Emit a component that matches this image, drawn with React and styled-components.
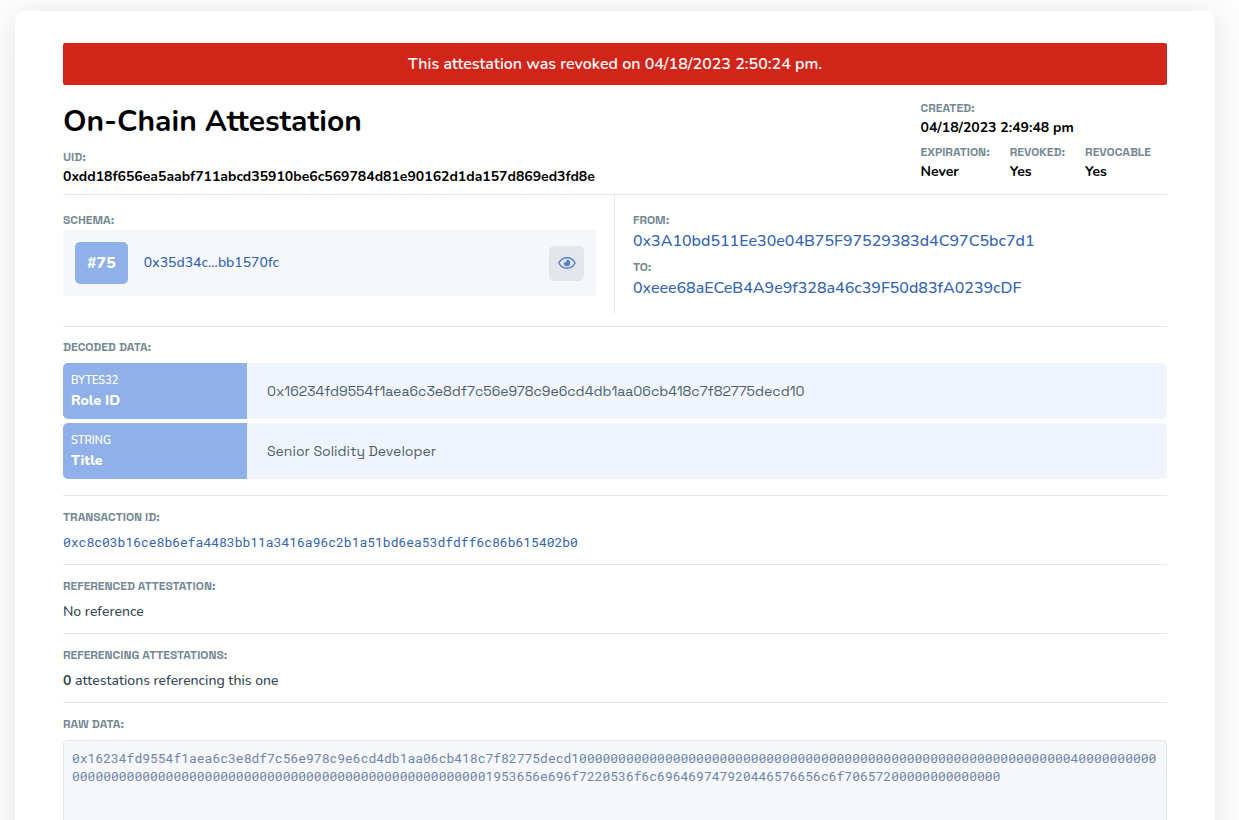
import React from "react";
import styled, { createGlobalStyle } from "styled-components";

const rounded = `"Nunito", "Open Sans", "Noto Sans", sans-serif`;
const grotesk = `"Space Grotesk", Inter, sans-serif`;
const mono = `"Roboto Mono", "Liberation Mono", monospace`;

const GlobalStyle = createGlobalStyle`
  *, *::before, *::after { box-sizing: border-box; }
  body { margin: 0; background: #fdfdfd; color: #000; font-family: ${rounded}; font-size: 14px; }
  h1, p { margin: 0; }
`;

const Page = styled.main`
  padding: 11px 24px 32px 15px;
`;

const Card = styled.article`
  padding: 32px 48px;
  background: #fff;
  border-radius: 10px;
  box-shadow: 0 4px 33px rgba(0, 0, 0, 0.1);
`;

const Banner = styled.div`
  padding: 10px 16px;
  border-radius: 2px;
  background: #d1251a;
  color: #fff;
  font-size: 16px;
  font-weight: 600;
  line-height: 22px;
  text-align: center;
`;

const Header = styled.header`
  display: flex;
  align-items: flex-start;
  justify-content: space-between;
  padding: 14px 16px 7px 0;
`;

const Title = styled.h1`
  margin-bottom: 3px;
  font-size: 30px;
  font-weight: 700;
  line-height: 46px;
`;

const Label = styled.label`
  display: block;
  margin-bottom: ${(p) => p.$gap ?? 1}px;
  color: #748893;
  font-family: ${grotesk};
  font-size: 12px;
  font-weight: 700;
  line-height: 18px;
  text-transform: uppercase;
`;

const Strong = styled.p`
  font-size: 14px;
  font-weight: 700;
  line-height: 20px;
`;

const Meta = styled.div`
  display: grid;
  gap: 5px;
`;

const MetaRow = styled.div`
  display: flex;
  gap: 20px;
`;

const Overview = styled.section`
  display: grid;
  grid-template-columns: 1fr 1fr;
  padding-bottom: 12px;
  border-top: 1px solid #e4e6ed;
`;

const SchemaPane = styled.div`
  padding: 16px 18px 18px 0;
  border-right: 1px solid #e4e6ed;
`;

const PartiesPane = styled.div`
  display: grid;
  align-content: start;
  gap: 6px;
  padding: 16px 0 0 18px;
`;

const SchemaBox = styled.div`
  display: flex;
  align-items: center;
  padding: 12px;
  background: #f5f7fb;
`;

const Badge = styled.span`
  padding: 10px 12px;
  border-radius: 5px;
  background: #8fb0e8;
  color: #fff;
  font-size: 16px;
  font-weight: 800;
  line-height: 22px;
`;

const Link = styled.a`
  display: block;
  color: #3363b3;
  text-decoration: none;
  font-family: ${(p) => (p.$mono ? mono : rounded)};
  font-size: ${(p) => p.$size}px;
  font-weight: ${(p) => (p.$mono ? 400 : 500)};
  line-height: ${(p) => (p.$size > 14 ? 22 : 18)}px;
`;

const SchemaLink = styled(Link)`
  flex: 1;
  margin-left: 16px;
  line-height: 22px;
`;

const EyeButton = styled.button`
  display: grid;
  place-items: center;
  width: 35px;
  height: 35px;
  padding: 0;
  border: 0;
  border-radius: 5px;
  background: #e3e7ec;
  color: #557fcb;
`;

const Section = styled.section`
  padding: 12px 0 11px;
  border-top: 1px solid #e4e6ed;
`;

const DecodedSection = styled(Section)`
  padding: 11px 0 16px;
`;

const DataTable = styled.table`
  display: block;
`;

const DataBody = styled.tbody`
  display: grid;
  gap: 4px;
`;

const DataRow = styled.tr`
  display: flex;
  height: 56px;
  border-radius: 5px;
  overflow: hidden;
`;

const NameCell = styled.th`
  width: 184px;
  padding: 9px 8px 7px;
  background: #8fb0e8;
  color: #fff;
  font-size: 14px;
  font-weight: 800;
  line-height: 22px;
  text-align: left;
`;

const Kind = styled.span`
  display: block;
  font-size: 11px;
  font-weight: 600;
  line-height: 18px;
`;

const ValueCell = styled.td`
  flex: 1;
  padding: 19px 20px;
  background: #f0f5fd;
  color: #4c5f6b;
  font-family: ${grotesk};
  font-size: 14px;
  line-height: 18px;
`;

const Text = styled.p`
  min-height: 20px;
  color: #364955;
  font-size: 14px;
  font-weight: 500;
  line-height: 20px;
`;

const RawData = styled.textarea`
  display: block;
  width: 100%;
  height: 120px;
  padding: 8px;
  border: 1px solid #e2e5e9;
  border-radius: 4px;
  background: #f5f7fb;
  color: #6f85a9;
  font-family: ${mono};
  font-size: 13px;
  line-height: 18px;
  word-break: break-all;
  overflow: hidden;
  resize: none;
`;

const EyeIcon = () => (
  <svg width="18" height="12" viewBox="0 0 18 12" fill="none" aria-hidden="true">
    <path
      d="M.8 6C2.5 2.7 5.5.8 9 .8S15.500 2.700 17.200 6C15.500 9.300 12.500 11.200 9 11.200S2.500 9.300.8 6Z"
      stroke="currentColor"
      strokeWidth="1.400"
      strokeLinejoin="round"
    />
    <path d="M9 2.800A3.200 3.200 0 1 1 5.900 5.200Q7.700 6 8.300 4.800Q8.700 3.800 8.200 2.900Z" fill="currentColor" />
  </svg>
);

const roleId = "16234fd9554f1aea6c3e8df7c56e978c9e6cd4db1aa06cb418c7f82775decd10";
const rawData =
  "0x" +
  roleId +
  "40".padStart(64, "0") +
  "19".padStart(64, "0") +
  "53656e696f7220536f6c696469747920446576656c6f706572".padEnd(64, "0");

const decoded = [
  { kind: "BYTES32", name: "Role ID", value: `0x${roleId}` },
  { kind: "STRING", name: "Title", value: "Senior Solidity Developer" },
];

const Field = ({ label, children }) => (
  <div>
    <Label as="div">{label}</Label>
    {children}
  </div>
);

export default function App() {
  return (
    <>
      <GlobalStyle />
      <Page>
        <Card>
          <Banner role="status">This attestation was revoked on 04/18/2023 2:50:24 pm.</Banner>

          <Header>
            <div>
              <Title>On-Chain Attestation</Title>
              <Field label="UID:">
                <Strong>0xdd18f656ea5aabf711abcd35910be6c569784d81e90162d1da157d869ed3fd8e</Strong>
              </Field>
            </div>
            <Meta>
              <Field label="Created:">
                <Strong>04/18/2023 2:49:48 pm</Strong>
              </Field>
              <MetaRow>
                <Field label="Expiration:"><Strong>Never</Strong></Field>
                <Field label="Revoked:"><Strong>Yes</Strong></Field>
                <Field label="Revocable"><Strong>Yes</Strong></Field>
              </MetaRow>
            </Meta>
          </Header>

          <Overview>
            <SchemaPane>
              <Field label="Schema:">
                <SchemaBox>
                  <Badge>#75</Badge>
                  <SchemaLink href="#schema" $size={14}>0x35d34c...bb1570fc</SchemaLink>
                  <EyeButton type="button" aria-label="View schema">
                    <EyeIcon />
                  </EyeButton>
                </SchemaBox>
              </Field>
            </SchemaPane>
            <PartiesPane>
              <Field label="From:">
                <Link href="#from" $size={16}>0x3A10bd511Ee30e04B75F97529383d4C97C5bc7d1</Link>
              </Field>
              <Field label="To:">
                <Link href="#to" $size={16}>0xeee68aECeB4A9e9f328a46c39F50d83fA0239cDF</Link>
              </Field>
            </PartiesPane>
          </Overview>

          <DecodedSection>
            <Label as="div" $gap={7}>Decoded data:</Label>
            <DataTable>
              <DataBody>
                {decoded.map((row) => (
                  <DataRow key={row.name}>
                    <NameCell scope="row">
                      <Kind>{row.kind}</Kind>
                      {row.name}
                    </NameCell>
                    <ValueCell>{row.value}</ValueCell>
                  </DataRow>
                ))}
              </DataBody>
            </DataTable>
          </DecodedSection>

          <Section>
            <Label as="div" $gap={7}>Transaction ID:</Label>
            <Text>
              <Link href="#transaction" $mono $size={13}>
                0xc8c03b16ce8b6efa4483bb11a3416a96c2b1a51bd6ea53dfdff6c86b615402b0
              </Link>
            </Text>
          </Section>

          <Section>
            <Label as="div" $gap={7}>Referenced Attestation:</Label>
            <Text>No reference</Text>
          </Section>

          <Section>
            <Label as="div" $gap={7}>Referencing Attestations:</Label>
            <Text><b>0</b> attestations referencing this one</Text>
          </Section>

          <Section>
            <Label htmlFor="raw-data" $gap={7}>Raw data:</Label>
            <RawData id="raw-data" readOnly spellCheck={false} value={rawData} />
          </Section>
        </Card>
      </Page>
    </>
  );
}
